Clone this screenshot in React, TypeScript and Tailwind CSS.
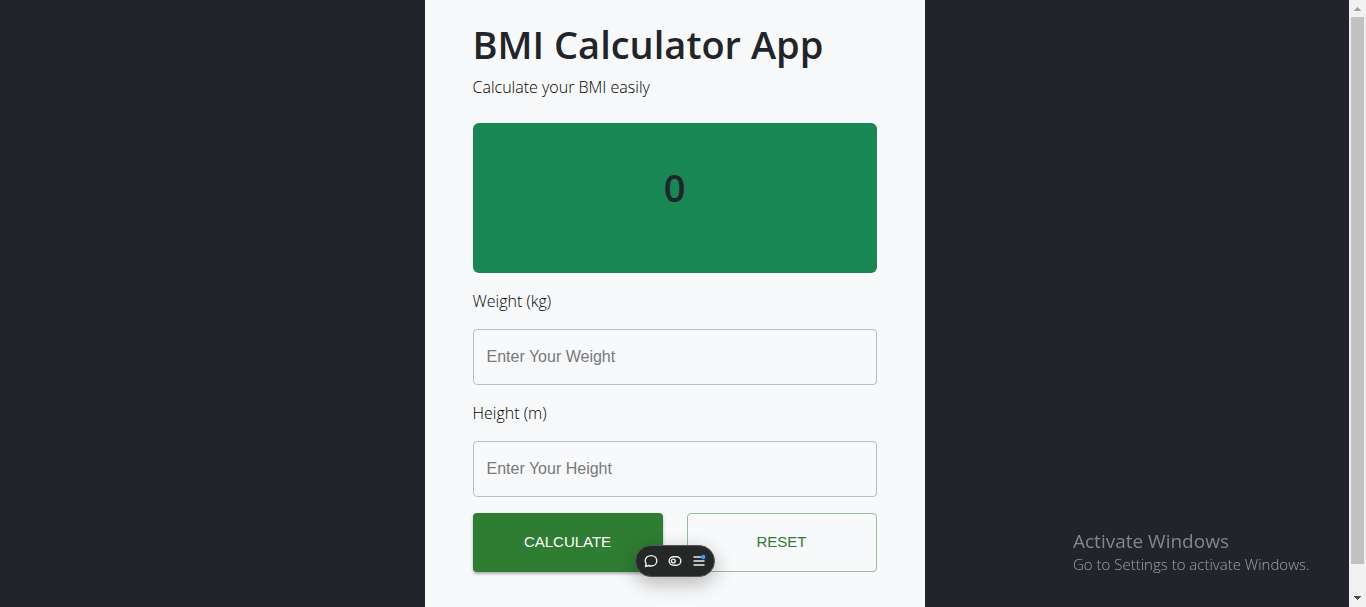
import { useState } from "react";

type FieldProps = {
  id: string;
  label: string;
  placeholder: string;
  value: string;
  onChange: (value: string) => void;
};

function Field({ id, label, placeholder, value, onChange }: FieldProps) {
  return (
    <div className="flex flex-col gap-4">
      <label htmlFor={id} className="text-base leading-6 font-light text-black">
        {label}
      </label>
      <input
        id={id}
        value={value}
        onChange={(e) => onChange(e.target.value)}
        placeholder={placeholder}
        className="h-14 w-full rounded border border-[#babcbe] bg-transparent px-[13px] font-['Liberation_Sans',Arial,sans-serif] text-base placeholder:text-[#77797b]"
      />
    </div>
  );
}

function Toolbar() {
  return (
    <div className="fixed bottom-[30px] left-[calc(50%-48px)] flex h-8 w-20 items-center justify-between rounded-full border border-[#555] bg-[#242826] px-[7px] text-[#ededed] shadow-[0_6px_20px_rgba(0,0,0,0.28)]">
      <button aria-label="Comments">
        <svg width="16" height="16" viewBox="0 0 16 16" fill="none" stroke="currentColor" strokeWidth="1.4">
          <path d="M2.4 13.6 3.2 10.7C2.5 9.9 2.2 8.9 2.2 7.8c0-3 2.6-5.2 5.9-5.2s5.7 2.2 5.7 5.2-2.5 5.2-5.7 5.2c-.9 0-1.7-.2-2.4-.5Z" strokeLinejoin="round" />
        </svg>
      </button>
      <button aria-label="Draft mode">
        <svg width="16" height="16" viewBox="0 0 16 16" fill="none" stroke="currentColor" strokeWidth="1.4">
          <rect x="2.2" y="3.7" width="11.6" height="8.6" rx="4.3" />
          <circle cx="6.3" cy="8" r="1.9" />
        </svg>
      </button>
      <button aria-label="Menu">
        <svg width="16" height="16" viewBox="0 0 16 16" fill="none" stroke="currentColor" strokeWidth="1.4">
          <path d="M2.5 4H10M2.5 8h11M2.5 12h11" />
          <circle cx="12.2" cy="4" r="2.2" fill="#3b9bff" stroke="none" />
        </svg>
      </button>
    </div>
  );
}

function Scrollbar() {
  return (
    <div aria-hidden="true" className="sticky top-0 flex h-screen w-[17px] shrink-0 flex-col items-center bg-[#f1f1f1]">
      <svg width="17" height="17" viewBox="0 0 17 17" shapeRendering="crispEdges">
        <path d="M8 7h1v1h1v1h1v1h1v1H5v-1h1V9h1V8h1Z" fill="#a3a3a3" />
      </svg>
      <div className="w-[13px] flex-[547] bg-[#c1c1c1]" />
      <div className="flex-[26]" />
      <svg width="17" height="17" viewBox="0 0 17 17" shapeRendering="crispEdges">
        <path d="M5 6h7v1h-1v1h-1v1H9v1H8V9H7V8H6V7H5Z" fill="#505050" />
      </svg>
    </div>
  );
}

export default function App() {
  const [weight, setWeight] = useState("");
  const [height, setHeight] = useState("");
  const [bmi, setBmi] = useState(0);

  const calculate = () => {
    const w = Number(weight);
    const h = Number(height);
    setBmi(w > 0 && h > 0 ? Math.round((w / (h * h)) * 10) / 10 : 0);
  };

  const reset = () => {
    setWeight("");
    setHeight("");
    setBmi(0);
  };

  return (
    <div className="flex min-h-screen bg-[#212529] font-['Open_Sans','Noto_Sans',sans-serif] text-[#212529]">
      <div className="flex flex-1 justify-center">
        <main className="w-full max-w-[500px] bg-[#f8f9fa] px-12 pt-5 pb-[34px]">
          <h1 className="text-[38px] leading-12 font-semibold">BMI Calculator App</h1>
          <p className="mt-[7px] text-base leading-6 font-light text-black">Calculate your BMI easily</p>
          <section className="mt-6 h-[150px] rounded-md bg-[#198754] pt-10 text-center">
            <output className="block text-[38px] leading-12 font-semibold">{bmi}</output>
          </section>
          <form
            className="mt-4 flex flex-col gap-4"
            onSubmit={(e) => {
              e.preventDefault();
              calculate();
            }}
          >
            <Field id="weight" label="Weight (kg)" placeholder="Enter Your Weight" value={weight} onChange={setWeight} />
            <Field id="height" label="Height (m)" placeholder="Enter Your Height" value={height} onChange={setHeight} />
            <div className="grid grid-cols-2 gap-6 font-['Liberation_Sans',Arial,sans-serif] text-[15px]">
              <button
                type="submit"
                className="h-[59px] rounded bg-[#2e7d32] text-white shadow-[0_2px_3px_rgba(0,0,0,0.3)]"
              >
                CALCULATE
              </button>
              <button
                type="button"
                onClick={reset}
                className="h-[59px] rounded border border-[#93be97] text-[#2e7d32]"
              >
                RESET
              </button>
            </div>
          </form>
        </main>
      </div>
      <Scrollbar />
      <Toolbar />
      <aside className="pointer-events-none fixed right-[57px] bottom-8 w-[236px] whitespace-nowrap text-[#84868a]">
        <p className="text-[19px] leading-6">Activate Windows</p>
        <p className="text-[15px] leading-[22px] font-light text-[#a0a2a5]">Go to Settings to activate Windows.</p>
      </aside>
    </div>
  );
}
